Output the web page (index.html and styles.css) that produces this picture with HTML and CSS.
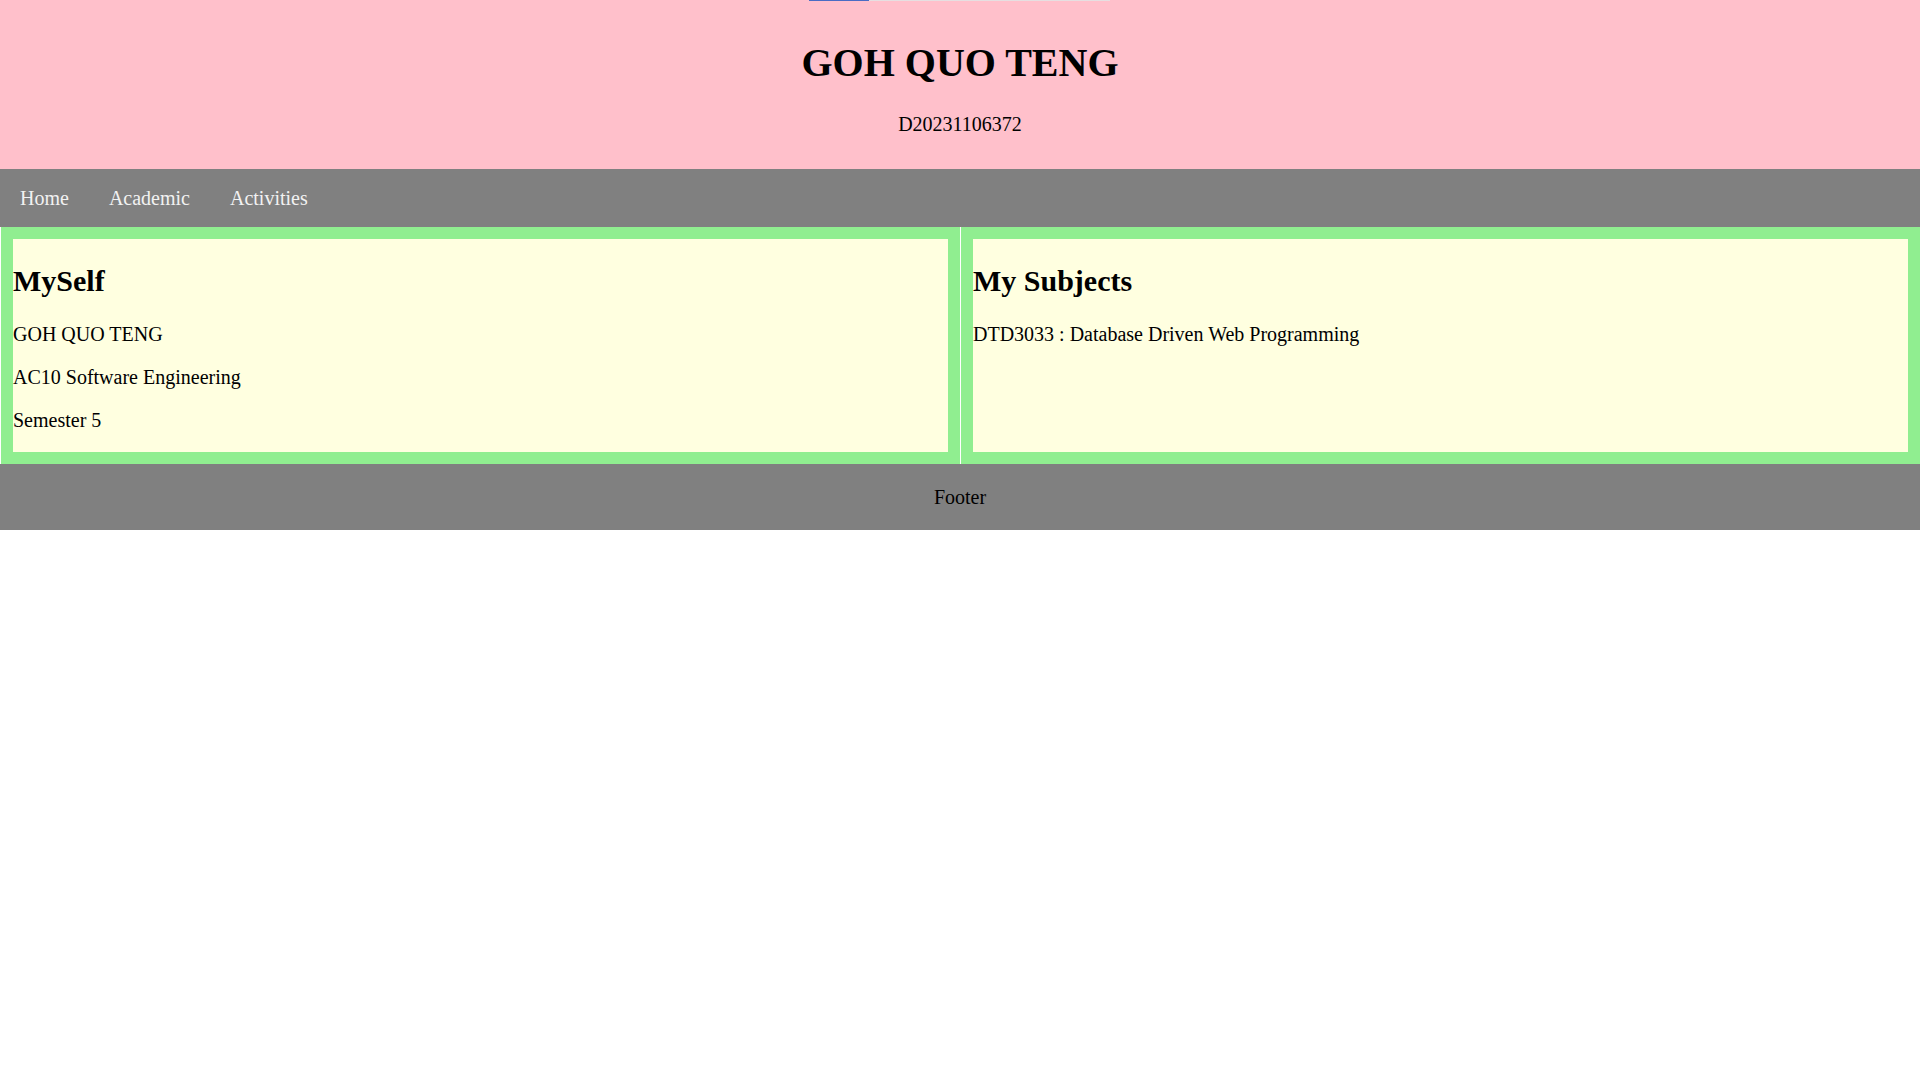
FILE: index.html
```html
<!DOCTYPE html>
<html lang="en">
<head>
  <meta charset="UTF-8" />
  <meta name="viewport" content="width=device-width, initial-scale=1.0" />
  <title>GOH QUO TENG</title>
  <link rel="stylesheet" href="styles.css">
</head>
<body>
  <div class="header">
    <div class="loadbar"><span class="loadbar-fill"></span></div>
    <h1>GOH QUO TENG</h1>
    <p>D20231106372</p>
  </div>

  <div class="topnav">
    <a href="#">Home</a>
    <a href="#">Academic</a>
    <a href="#">Activities</a>
  </div>

  <div class="row">
    <div class="column">
      <div class="card">
        <h2>MySelf</h2>
        <p>GOH QUO TENG</p>
        <p>AC10 Software Engineering</p>
        <p>Semester 5</p>
      </div>
    </div>
    <div class="column">
      <div class="card">
        <h2>My Subjects</h2>
        <p>DTD3033 : Database Driven Web Programming</p>
      </div>
    </div>
  </div>

  <div class="footer">Footer</div>
</body>
</html>
```

FILE: styles.css
```css
body {
  font-family: "Liberation Serif", "Times New Roman", serif;
  font-size: 20px;
  margin: 0;
  color: #000;
}
.header {
  position: relative;
  background-color: pink;
  text-align: center;
  padding: 12px 0 13px;
}
.header h1 {
  font-size: 40px;
  margin: 27px 0;
}
.header p {
  margin: 20px 0;
}
.loadbar {
  position: absolute;
  top: 0;
  left: 809px;
  width: 301px;
  height: 1px;
  background: #e6dfe1;
}
.loadbar-fill {
  display: block;
  width: 60px;
  height: 1px;
  background: #4a6cc4;
}
.topnav {
  display: flex;
  background-color: #808080;
}
.topnav a {
  color: #f2f2f2;
  text-decoration: none;
  padding: 17.5px 20px;
  line-height: 23px;
}
.row {
  display: flex;
  gap: 1px;
  padding-left: 1px;
}
.column {
  flex: 1;
  display: flex;
  background-color: lightgreen;
  padding: 12px;
}
.card {
  flex: 1;
  display: flow-root;
  background-color: lightyellow;
}
.card h2 {
  font-size: 30px;
  margin: 25px 0;
}
.card p {
  margin: 20px 0;
  line-height: 23px;
}
.footer {
  background-color: #808080;
  text-align: center;
  padding: 21.5px 0;
  line-height: 23px;
}
```
